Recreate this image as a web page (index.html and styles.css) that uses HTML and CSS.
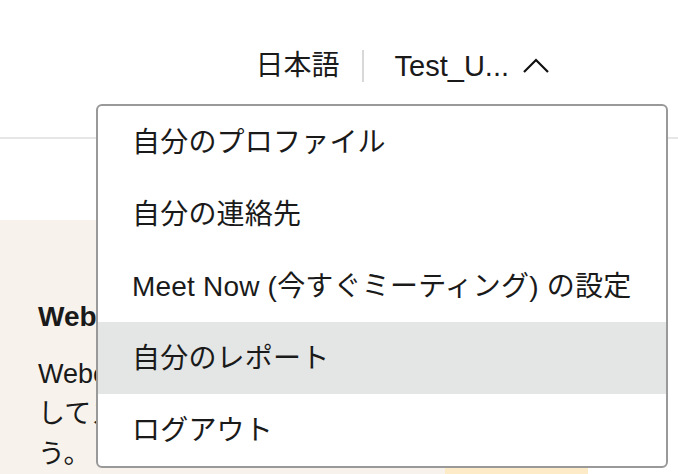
FILE: index.html
```html
<!DOCTYPE html>
<html lang="ja">
<head>
<meta charset="utf-8">
<title>Menu</title>
<link rel="stylesheet" href="styles.css">
</head>
<body>
<header class="topbar">
  <div class="topbar-right">
    <span class="lang">日本語</span>
    <span class="sep"></span>
    <button class="user">
      <span class="user-name">Test_U...</span>
      <svg class="chev" width="28" height="16" viewBox="0 0 28 16"><path d="M2 14 L14 2 L26 14" fill="none" stroke="#111" stroke-width="2.2"/></svg>
    </button>
  </div>
</header>
<main class="main">
  <section class="panel">
    <h2 class="panel-title">Webex へようこそ</h2>
    <p class="panel-text">Webex アプリをダウンロード<br>してスムーズに始めましょ<br>う。</p>
  </section>
  <div class="promo"></div>
</main>
<ul class="menu">
  <li class="menu-item">自分のプロファイル</li>
  <li class="menu-item">自分の連絡先</li>
  <li class="menu-item">Meet Now (今すぐミーティング) の設定</li>
  <li class="menu-item active">自分のレポート</li>
  <li class="menu-item">ログアウト</li>
</ul>
</body>
</html>
```
FILE: styles.css
```css
* { box-sizing: border-box; }
html, body {
  margin: 0;
  padding: 0;
  width: 678px;
  height: 474px;
  overflow: hidden;
  background: #fff;
  font-family: "Liberation Sans", "Noto Sans CJK JP", sans-serif;
  color: #1a1a1a;
}
.topbar {
  height: 139px;
  border-bottom: 2px solid #e6e6e6;
  display: flex;
  justify-content: flex-end;
  padding: 48px 128px 0 0;
}
.topbar-right {
  display: flex;
  align-items: center;
  height: 36px;
}
.lang {
  font-size: 28px;
  line-height: 36px;
}
.sep {
  width: 2px;
  height: 32px;
  background: #d8d8d8;
  margin: 0 31px 0 22px;
}
.user {
  display: flex;
  align-items: center;
  border: 0;
  background: none;
  padding: 0;
  font: inherit;
  color: inherit;
}
.user-name {
  font-size: 29px;
  line-height: 36px;
}
.chev {
  margin-left: 13px;
}
.main {
  padding-top: 81px;
  display: flex;
  align-items: flex-start;
}
.panel {
  width: 445px;
  height: 260px;
  background: #f7f3ec;
  padding: 80px 0 0 38px;
}
.panel-title {
  margin: 0;
  font-size: 28px;
  line-height: 34px;
  font-weight: bold;
  white-space: nowrap;
}
.panel-text {
  margin: 20px 0 0;
  font-size: 27px;
  line-height: 40px;
  white-space: nowrap;
}
.promo {
  margin-top: 248px;
  width: 143px;
  height: 20px;
  background: #fdebc8;
}
.menu {
  position: absolute;
  left: 96px;
  top: 104px;
  width: 572px;
  margin: 0;
  padding: 0;
  list-style: none;
  background: #fff;
  border: 2px solid #999;
  border-radius: 6px;
  overflow: hidden;
}
.menu-item {
  height: 72px;
  display: flex;
  align-items: center;
  padding: 0 0 5px 34px;
  font-family: "Liberation Sans", "Noto Sans CJK JP", sans-serif;
  font-size: 28px;
  letter-spacing: 0.2px;
  color: #1a1a1a;
  white-space: nowrap;
}
.menu-item.active {
  background: #e4e6e5;
}
```
